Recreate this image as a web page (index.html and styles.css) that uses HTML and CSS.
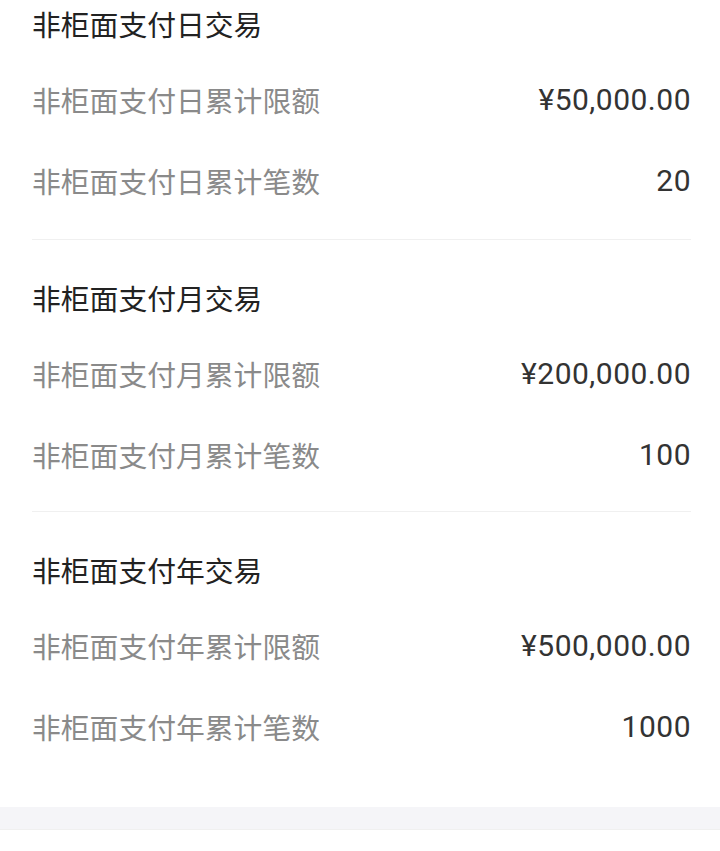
FILE: index.html
```html
<!DOCTYPE html>
<html lang="zh-CN">
<head>
<meta charset="utf-8">
<link rel="stylesheet" href="styles.css">
</head>
<body>
<main class="page">
  <section class="group">
    <h2 class="group-title">非柜面支付日交易</h2>
    <div class="row"><span class="label">非柜面支付日累计限额</span><span class="value">¥50,000.00</span></div>
    <div class="row"><span class="label">非柜面支付日累计笔数</span><span class="value">20</span></div>
  </section>
  <section class="group">
    <h2 class="group-title">非柜面支付月交易</h2>
    <div class="row"><span class="label">非柜面支付月累计限额</span><span class="value">¥200,000.00</span></div>
    <div class="row"><span class="label">非柜面支付月累计笔数</span><span class="value">100</span></div>
  </section>
  <section class="group last">
    <h2 class="group-title">非柜面支付年交易</h2>
    <div class="row"><span class="label">非柜面支付年累计限额</span><span class="value">¥500,000.00</span></div>
    <div class="row"><span class="label">非柜面支付年累计笔数</span><span class="value">1000</span></div>
  </section>
  <div class="band"></div>
</main>
</body>
</html>
```
FILE: styles.css
```css
* { box-sizing: border-box; }
html, body {
  margin: 0;
  padding: 0;
  background: #ffffff;
}
body {
  font-family: "Noto Sans CJK SC", "Noto Sans", sans-serif;
}
.page {
  display: flex;
  flex-direction: column;
  min-height: 851px;
  padding-top: 0;
}
.group {
  margin: 0 29px 0 32px;
  padding-bottom: 16px;
  border-bottom: 1px solid #f0f0f0;
  display: flex;
  flex-direction: column;
}
.group:first-child {
  margin-top: -2px;
  padding-bottom: 18px;
}
.group + .group {
  padding-top: 32px;
}
.group.last {
  border-bottom: none;
  padding-bottom: 40px;
}
.group-title {
  margin: 0 0 9px 0;
  height: 52px;
  line-height: 52px;
  font-size: 28.8px;
  font-weight: 400;
  color: #222222;
}
.row {
  height: 81px;
  display: flex;
  align-items: center;
  justify-content: space-between;
}
.label {
  font-size: 28.8px;
  color: #8a8a8a;
}
.value {
  font-family: Roboto, "Noto Sans", sans-serif;
  font-size: 30px;
  letter-spacing: 0.5px;
  color: #333333;
}
.band {
  height: 23px;
  background: #f5f5f8;
  border-bottom: 1px solid #f0f0f0;
}
```
